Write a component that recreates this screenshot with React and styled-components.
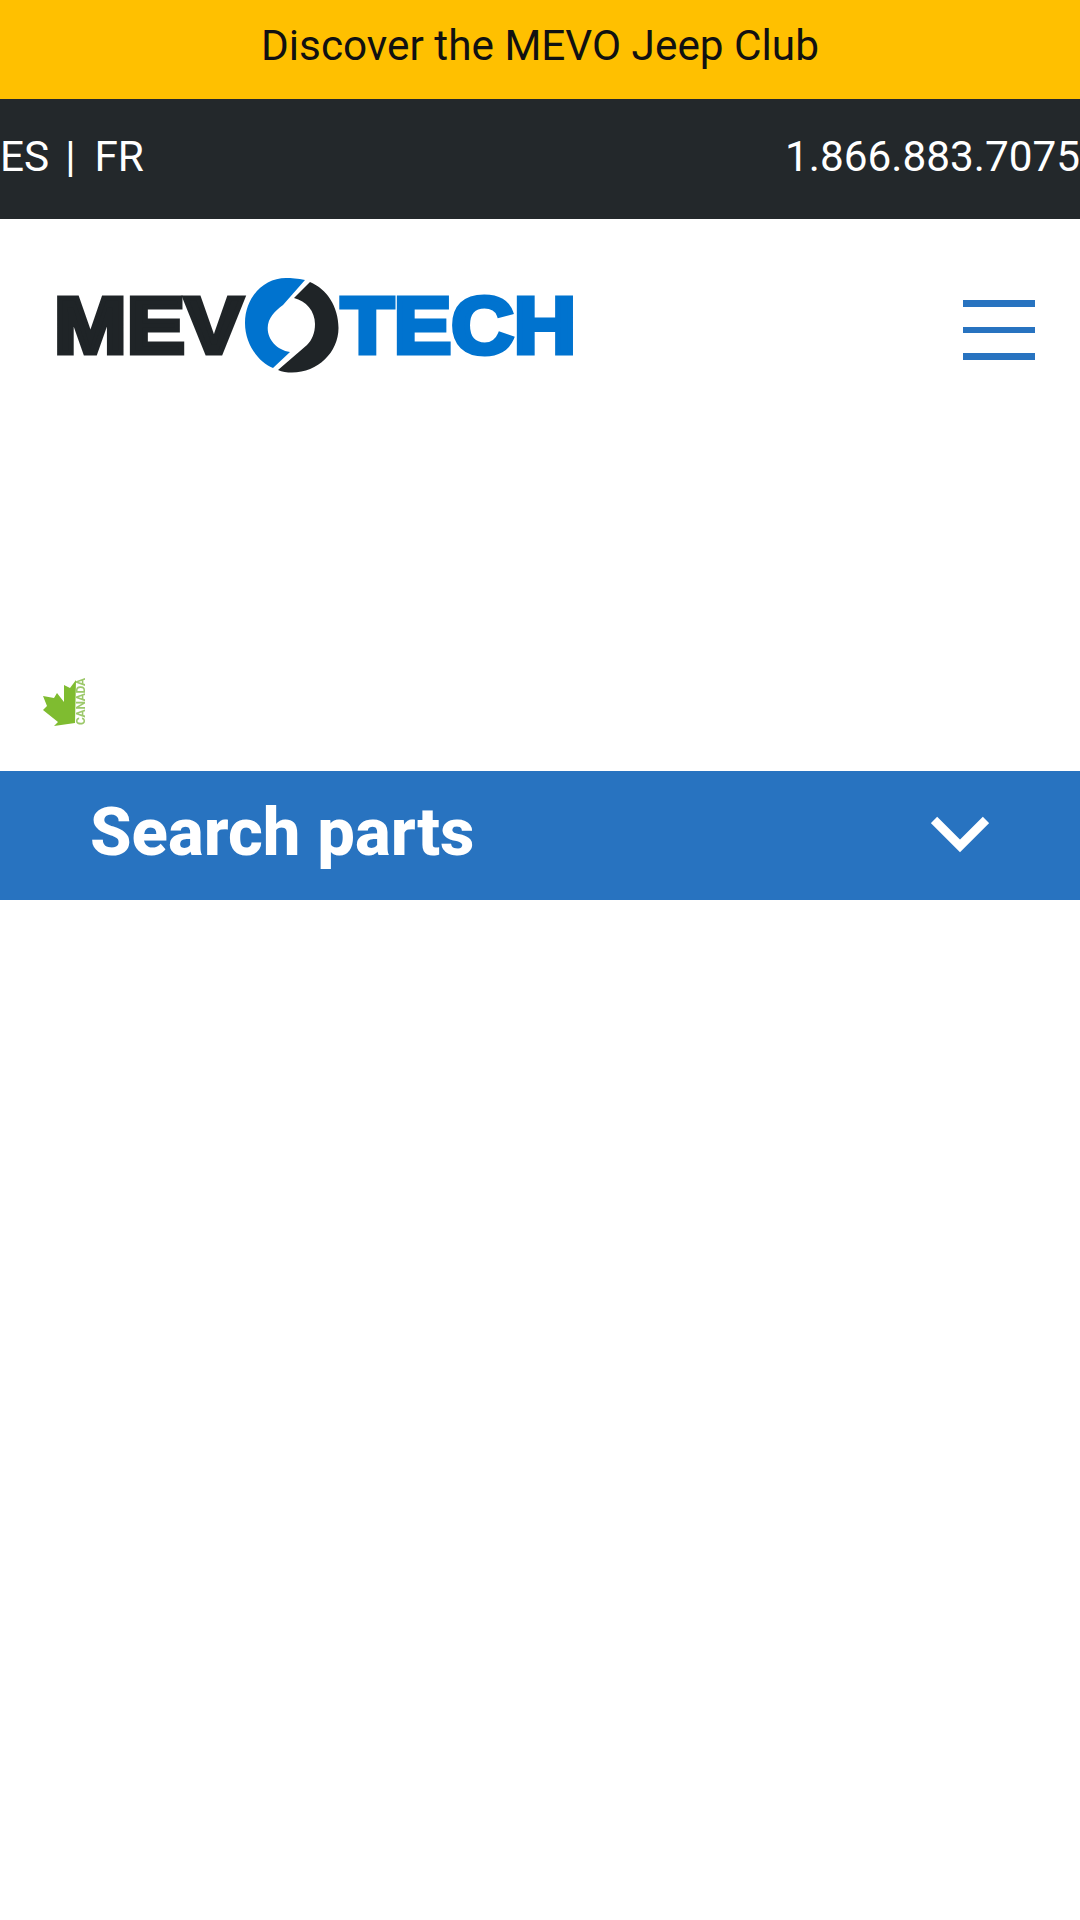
import React from "react";
import styled, { createGlobalStyle } from "styled-components";

const Global = createGlobalStyle`
  html, body { margin: 0; padding: 0; background: #fff; }
  body { font-family: Roboto, "Liberation Sans", sans-serif; }
`;

const Page = styled.div`
  width: 1080px;
  height: 1920px;
  overflow: hidden;
  background: #fff;
  display: flex;
  flex-direction: column;
`;

const Promo = styled.div`
  height: 99px;
  background: #ffc000;
  color: #111;
  font-size: 42.3px;
  line-height: 92px;
  text-align: center;
`;

const TopBar = styled.div`
  height: 120px;
  background: #23282b;
  color: #fff;
  font-size: 42.3px;
  display: flex;
  justify-content: space-between;
  align-items: center;
  padding-bottom: 6px;
  box-sizing: border-box;
`;

const Languages = styled.div`
  display: flex;
`;

const Separator = styled.span`
  margin: 0 19px 0 16px;
`;

const Header = styled.div`
  height: 552px;
  box-sizing: border-box;
  padding: 59px 45px 0 43px;
  display: flex;
  flex-direction: column;
`;

const HeaderRow = styled.div`
  display: flex;
  justify-content: space-between;
  align-items: flex-start;
`;

const Burger = styled.div`
  margin-top: 22px;
  width: 72px;
  display: flex;
  flex-direction: column;
  gap: 20px;
`;

const BurgerBar = styled.span`
  display: block;
  height: 6.5px;
  background: #2873c0;
`;

const Badge = styled.div`
  margin-top: 297px;
  width: 50px;
  height: 60px;
  filter: blur(0.6px);
`;

const SearchBar = styled.div`
  height: 129px;
  background: #2873c0;
  color: #fff;
  display: flex;
  align-items: center;
  justify-content: space-between;
  padding: 0 91px 0 90px;
`;

const SearchTitle = styled.div`
  font-size: 67px;
  font-weight: 800;
  line-height: 1;
  margin-top: -7px;
`;

const ChevronIcon = styled.svg`
  margin-top: -2px;
`;

const Logo = () => (
  <svg width="540" height="100" viewBox="0 0 540 100" style={{ display: "block" }} aria-label="MEVOTECH">
    <text
      x="11"
      y="74.5"
      fontFamily="'Liberation Sans', sans-serif"
      fontWeight="700"
      fontSize="80"
      textLength="189"
      lengthAdjust="spacingAndGlyphs"
      fill="#1f2427"
      stroke="#1f2427"
      strokeWidth="5"
    >
      MEV
    </text>
    <path
      d="M262 2 C255 0.5 248 0 243 0 C220 0 202 20 202 45 C202 65 214 83 230 90 L247 74 C234 72 224.7 62 224.7 50 C224.7 40 232 33 240 27 Z"
      fill="#0073cf"
    />
    <path
      d="M267 4 L251 20 C263 23 272 33 272 46 C272 55 269 62 264 67 L235 92 C239 94 244 94.5 249 94.5 C275 94.5 295.5 74 295.5 50 C295.5 29 284 11 267 4 Z"
      fill="#1f2427"
    />
    <text
      x="298"
      y="74.5"
      fontFamily="'Liberation Sans', sans-serif"
      fontWeight="700"
      fontSize="80"
      textLength="235"
      lengthAdjust="spacingAndGlyphs"
      fill="#0073cf"
      stroke="#0073cf"
      strokeWidth="5"
    >
      TECH
    </text>
  </svg>
);

const CanadaBadge = () => (
  <svg width="50" height="60" viewBox="0 0 50 60">
    <polygon
      points="33,5 27,13 21,10 21,27 14,18 11,23 0,21 4,31 0,35 15,47 11,51 32,48"
      fill="#7fbc30"
    />
    <text
      x="0"
      y="0"
      transform="translate(42 50) rotate(-90)"
      fontFamily="Roboto, sans-serif"
      fontSize="12"
      fontWeight="700"
      textLength="47"
      fill="#9cc86a"
    >
      CANADA
    </text>
  </svg>
);

const Chevron = () => (
  <ChevronIcon width="58" height="38" viewBox="0 0 58 38" fill="none">
    <path d="M3 4 L29 30 L55 4" stroke="#fff" strokeWidth="9" />
  </ChevronIcon>
);

export default function App() {
  return (
    <Page>
      <Global />
      <Promo>Discover the MEVO Jeep Club</Promo>
      <TopBar>
        <Languages>
          <span>ES</span>
          <Separator>|</Separator>
          <span>FR</span>
        </Languages>
        <span>1.866.883.7075</span>
      </TopBar>
      <Header>
        <HeaderRow>
          <Logo />
          <Burger>
            <BurgerBar />
            <BurgerBar />
            <BurgerBar />
          </Burger>
        </HeaderRow>
        <Badge>
          <CanadaBadge />
        </Badge>
      </Header>
      <SearchBar>
        <SearchTitle>Search parts</SearchTitle>
        <Chevron />
      </SearchBar>
    </Page>
  );
}
